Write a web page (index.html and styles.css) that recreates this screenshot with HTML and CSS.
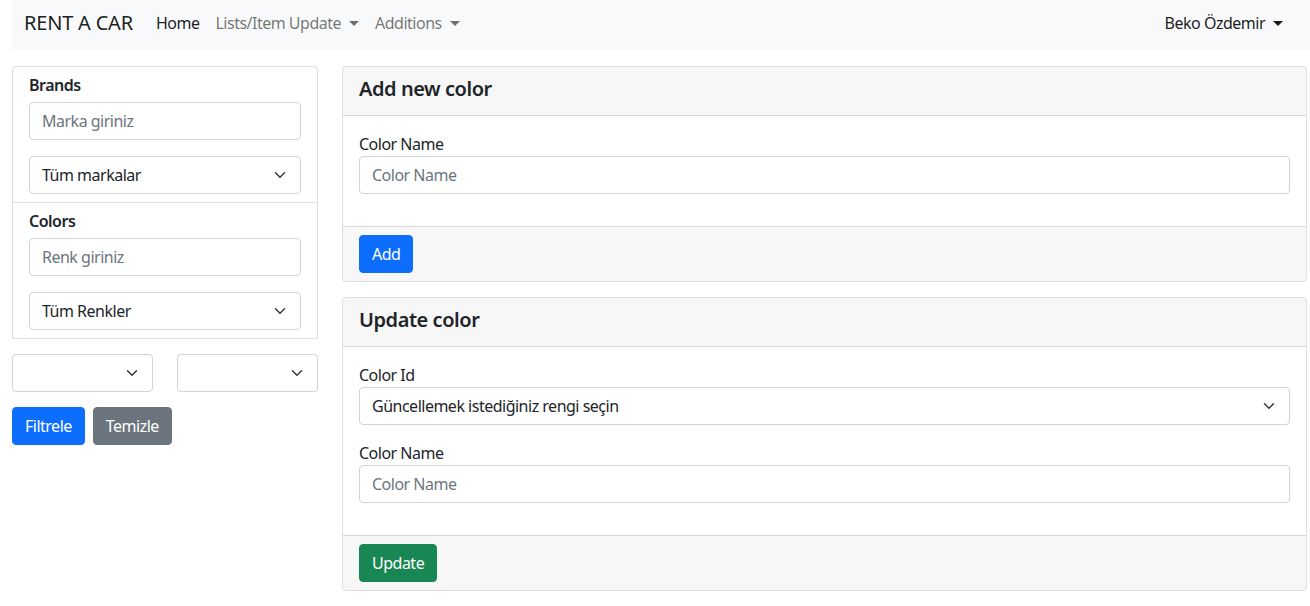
FILE: index.html
```html
<!DOCTYPE html>
<html lang="tr">
<head>
<meta charset="utf-8">
<title>Rent a Car</title>
<link rel="stylesheet" href="styles.css">
</head>
<body>
<nav class="navbar">
  <a class="brand">RENT A CAR</a>
  <ul class="nav">
    <li><a class="nav-link active">Home</a></li>
    <li><a class="nav-link">Lists/Item Update <span class="caret"></span></a></li>
    <li><a class="nav-link">Additions <span class="caret"></span></a></li>
  </ul>
  <div class="nav-right">
    <a class="nav-link user">Beko Özdemir <span class="caret"></span></a>
  </div>
</nav>

<main class="layout">
  <aside class="sidebar">
    <div class="list-group">
      <div class="list-item">
        <label class="group-label">Brands</label>
        <input class="form-control mb" type="text" placeholder="Marka giriniz">
        <div class="form-select"><span>Tüm markalar</span><svg class="chev" viewBox="0 0 16 16" width="16" height="12"><path d="m2 5 6 6 6-6" fill="none" stroke="#343a40" stroke-width="2" stroke-linecap="round" stroke-linejoin="round"/></svg></div>
      </div>
      <div class="list-item">
        <label class="group-label">Colors</label>
        <input class="form-control mb" type="text" placeholder="Renk giriniz">
        <div class="form-select"><span>Tüm Renkler</span><svg class="chev" viewBox="0 0 16 16" width="16" height="12"><path d="m2 5 6 6 6-6" fill="none" stroke="#343a40" stroke-width="2" stroke-linecap="round" stroke-linejoin="round"/></svg></div>
      </div>
    </div>
    <div class="select-pair">
      <div class="form-select"><span></span><svg class="chev" viewBox="0 0 16 16" width="16" height="12"><path d="m2 5 6 6 6-6" fill="none" stroke="#343a40" stroke-width="2" stroke-linecap="round" stroke-linejoin="round"/></svg></div>
      <div class="form-select"><span></span><svg class="chev" viewBox="0 0 16 16" width="16" height="12"><path d="m2 5 6 6 6-6" fill="none" stroke="#343a40" stroke-width="2" stroke-linecap="round" stroke-linejoin="round"/></svg></div>
    </div>
    <div class="btn-row">
      <button class="btn btn-primary">Filtrele</button>
      <button class="btn btn-secondary">Temizle</button>
    </div>
  </aside>

  <section class="content">
    <div class="card">
      <div class="card-header"><h5>Add new color</h5></div>
      <div class="card-body">
        <label class="form-label">Color Name</label>
        <input class="form-control mb" type="text" placeholder="Color Name">
      </div>
      <div class="card-footer"><button class="btn btn-primary">Add</button></div>
    </div>

    <div class="card">
      <div class="card-header"><h5>Update color</h5></div>
      <div class="card-body">
        <label class="form-label">Color Id</label>
        <div class="form-select mb"><span>Güncellemek istediğiniz rengi seçin</span><svg class="chev" viewBox="0 0 16 16" width="16" height="12"><path d="m2 5 6 6 6-6" fill="none" stroke="#343a40" stroke-width="2" stroke-linecap="round" stroke-linejoin="round"/></svg></div>
        <label class="form-label">Color Name</label>
        <input class="form-control mb" type="text" placeholder="Color Name">
      </div>
      <div class="card-footer"><button class="btn btn-success">Update</button></div>
    </div>
  </section>
</main>
</body>
</html>
```

FILE: styles.css
```css
* { box-sizing: border-box; }
html, body { margin: 0; padding: 0; }
body {
  font-family: "Noto Sans", "Open Sans", sans-serif;
  font-size: 16px;
  line-height: 24px;
  letter-spacing: -0.5px;
  color: #212529;
  background: #fff;
  overflow: hidden;
}

.navbar {
  margin-left: 12px;
  height: 50px;
  background: #f8f9fa;
  display: flex;
  align-items: center;
  padding: 0 19px 4px 12px;
}
.brand {
  font-size: 20px;
  line-height: 30px;
  letter-spacing: -0.2px;
  color: rgba(0,0,0,.9);
  margin-right: 15px;
}
.nav {
  list-style: none;
  margin: 0;
  padding: 0;
  display: flex;
}
.nav-link {
  display: flex;
  align-items: center;
  padding: 8px;
  color: rgba(0,0,0,.55);
  text-decoration: none;
}
.nav-link.active, .nav-link.user { color: rgba(0,0,0,.9); }
.caret {
  display: inline-block;
  margin-left: 8px;
  width: 0;
  height: 0;
  border-top: 5px solid currentColor;
  border-left: 5px solid transparent;
  border-right: 5px solid transparent;
}
.nav-right { margin-left: auto; }

.layout {
  display: grid;
  grid-template-columns: 306px 1fr;
  gap: 24px;
  padding: 16px 3px 0 12px;
}

.list-group {
  border: 1px solid rgba(0,0,0,.125);
  border-radius: 4px 4px 0 0;
}
.list-item { padding: 8px 16px; }
.list-item + .list-item { border-top: 1px solid rgba(0,0,0,.125); }
.group-label {
  display: block;
  font-weight: 600;
  line-height: 24px;
  height: 24px;
  margin: -2px 0 5px;
}

.form-control, .form-select {
  display: flex;
  align-items: center;
  width: 100%;
  height: 38px;
  padding: 6px 12px;
  font: inherit;
  font-size: 16px;
  letter-spacing: -0.5px;
  color: #212529;
  background: #fff;
  border: 1px solid #ced4da;
  border-radius: 4px;
  outline: none;
}
.form-control::placeholder { color: #6c757d; opacity: 1; }
.form-select span { flex: 1; white-space: nowrap; }
.form-select .chev { flex: none; }
.mb { margin-bottom: 16px; }

.select-pair {
  display: grid;
  grid-template-columns: 1fr 1fr;
  gap: 24px;
  margin-top: 15px;
}
.btn-row {
  display: flex;
  gap: 8px;
  margin-top: 15px;
}
.btn {
  font: inherit;
  font-size: 16px;
  line-height: 24px;
  letter-spacing: -0.5px;
  padding: 6px 12px;
  border: 1px solid transparent;
  border-radius: 4px;
  color: #fff;
}
.btn-primary { background: #0d6efd; border-color: #0d6efd; }
.btn-secondary { background: #6c757d; border-color: #6c757d; }
.btn-success { background: #198754; border-color: #198754; }

.content { display: flex; flex-direction: column; gap: 15px; }
.card {
  border: 1px solid rgba(0,0,0,.125);
  border-radius: 4px;
  overflow: hidden;
}
.card-header {
  background: rgba(0,0,0,.03);
  border-bottom: 1px solid rgba(0,0,0,.125);
  padding: 10px 16px 14px;
}
.card-header h5 {
  margin: 0;
  font-size: 20px;
  line-height: 24px;
  font-weight: 600;
  letter-spacing: -0.45px;
}
.card-body { padding: 16px 16px 0; }
.card-body .mb:last-child { margin-bottom: 32px; }
.form-label { display: block; line-height: 24px; }
.card-footer {
  background: rgba(0,0,0,.03);
  border-top: 1px solid rgba(0,0,0,.125);
  padding: 8px 16px;
}
```
